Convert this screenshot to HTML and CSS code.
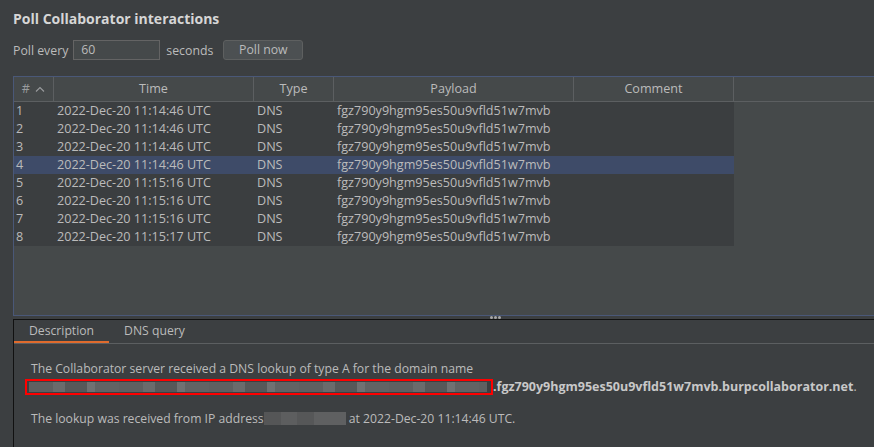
FILE: index.html
```html
<!DOCTYPE html>
<html>
<head>
<meta charset="utf-8">
<link rel="stylesheet" href="styles.css">
</head>
<body>
<div class="page">
  <div class="title">Poll Collaborator interactions</div>
  <div class="poll">
    <span class="lbl">Poll every</span>
    <div class="input">60</div>
    <span class="lbl">seconds</span>
    <div class="btn">Poll now</div>
  </div>
  <div class="tablewrap">
    <div class="thead">
      <div class="th c1"># <svg class="caret" width="10" height="6" viewBox="0 0 10 6"><path d="M1 5.5 L5 1.5 L9 5.5" fill="none" stroke="#9a9c9e" stroke-width="1.1"/></svg></div>
      <div class="th c2">Time</div>
      <div class="th c3">Type</div>
      <div class="th c4">Payload</div>
      <div class="th c5">Comment</div>
      <div class="th c6"></div>
    </div>
    <div class="tbody">
      <div class="tr"><div class="td c1">1</div><div class="td c2">2022-Dec-20 11:14:46 UTC</div><div class="td c3">DNS</div><div class="td c4">fgz790y9hgm95es50u9vfld51w7mvb</div><div class="td c5"></div></div>
      <div class="tr"><div class="td c1">2</div><div class="td c2">2022-Dec-20 11:14:46 UTC</div><div class="td c3">DNS</div><div class="td c4">fgz790y9hgm95es50u9vfld51w7mvb</div><div class="td c5"></div></div>
      <div class="tr"><div class="td c1">3</div><div class="td c2">2022-Dec-20 11:14:46 UTC</div><div class="td c3">DNS</div><div class="td c4">fgz790y9hgm95es50u9vfld51w7mvb</div><div class="td c5"></div></div>
      <div class="tr sel"><div class="td c1">4</div><div class="td c2">2022-Dec-20 11:14:46 UTC</div><div class="td c3">DNS</div><div class="td c4">fgz790y9hgm95es50u9vfld51w7mvb</div><div class="td c5"></div></div>
      <div class="tr"><div class="td c1">5</div><div class="td c2">2022-Dec-20 11:15:16 UTC</div><div class="td c3">DNS</div><div class="td c4">fgz790y9hgm95es50u9vfld51w7mvb</div><div class="td c5"></div></div>
      <div class="tr"><div class="td c1">6</div><div class="td c2">2022-Dec-20 11:15:16 UTC</div><div class="td c3">DNS</div><div class="td c4">fgz790y9hgm95es50u9vfld51w7mvb</div><div class="td c5"></div></div>
      <div class="tr"><div class="td c1">7</div><div class="td c2">2022-Dec-20 11:15:16 UTC</div><div class="td c3">DNS</div><div class="td c4">fgz790y9hgm95es50u9vfld51w7mvb</div><div class="td c5"></div></div>
      <div class="tr"><div class="td c1">8</div><div class="td c2">2022-Dec-20 11:15:17 UTC</div><div class="td c3">DNS</div><div class="td c4">fgz790y9hgm95es50u9vfld51w7mvb</div><div class="td c5"></div></div>
    </div>
  </div>
  <div class="splitter"><span class="dot"></span><span class="dot"></span><span class="dot"></span></div>
  <div class="panel">
    <div class="tabs">
      <div class="tab active">Description</div>
      <div class="tab">DNS query</div>
    </div>
    <div class="content">
      <div class="line1">The Collaborator server received a DNS lookup of type A for the domain name</div>
      <div class="line2"><span class="redbox"><span class="blur wide"></span></span><b>.fgz790y9hgm95es50u9vfld51w7mvb.burpcollaborator.net</b>.</div>
      <div class="line3">The lookup was received from IP address<span class="blur ip"></span> at 2022-Dec-20 11:14:46 UTC.</div>
    </div>
  </div>
</div>
</body>
</html>
```
FILE: styles.css
```css
html, body {
  margin: 0;
  padding: 0;
  background: #3c3f41;
}
body {
  font-family: "Open Sans", "Noto Sans", sans-serif;
  font-size: 12.6px;
  color: #bbbbbb;
  width: 874px;
  height: 447px;
  overflow: hidden;
}
.page {
  padding-left: 13px;
}
.title {
  margin-top: 9px;
  height: 20px;
  line-height: 20px;
  font-size: 14px;
  font-weight: bold;
  color: #d6d6d6;
}
.poll {
  margin-top: 11px;
  height: 20px;
  display: flex;
  align-items: center;
  font-size: 12.3px;
}
.input {
  margin-left: 5px;
  width: 78px;
  height: 18px;
  border: 1px solid #646464;
  background: #45494a;
  padding-left: 7px;
  line-height: 18px;
  color: #bbbbbb;
}
.input + .lbl { margin-left: 6px; }
.btn {
  margin-left: 10px;
  width: 78px;
  height: 18px;
  border: 1px solid #5e6060;
  border-radius: 3px;
  background: #4c5052;
  text-align: center;
  line-height: 18px;
}
.tablewrap {
  margin-top: 16px;
  height: 238px;
  border-top: 1px solid #4a5878;
  border-bottom: 1px solid #4a5878;
  border-left: 1px solid #4a5878;
  background: #45494a;
  display: flex;
  flex-direction: column;
}
.thead {
  display: flex;
  height: 24px;
  border-bottom: 1px solid #5c5f61;
  background: #45494a;
}
.th {
  box-sizing: border-box;
  text-align: center;
  line-height: 24px;
  color: #bbbbbb;
  border-right: 1px solid #5c5f61;
}
.th.c1 { color: #9a9c9e; }
.caret { margin-left: 2px; vertical-align: 1px; }
.th.c6 { flex: 1; border-right: none; }
.c1 { width: 40px; }
.c2 { width: 200px; }
.c3 { width: 80px; }
.c4 { width: 240px; }
.c5 { width: 160px; }
.tbody {
  display: flex;
  flex-direction: column;
  width: 720px;
}
.tr {
  display: flex;
  height: 18px;
  background: #3b3e40;
}
.tr.sel { background: #3e4b68; }
.td {
  box-sizing: border-box;
  line-height: 18px;
  padding-left: 3px;
  white-space: nowrap;
  color: #bbbbbb;
}
.td.c1 { padding-left: 2px; }
.splitter {
  height: 3px;
  display: flex;
  justify-content: center;
  align-items: center;
  gap: 1px;
  margin-left: -13px;
  padding-left: 116px;
}
.dot {
  width: 3px;
  height: 3px;
  border-radius: 50%;
  background: #a8a8a8;
}
.panel {
  border-top: 1px solid #111111;
  border-left: 1px solid #111111;
  height: 130px;
  font-size: 12.2px;
}
.tabs {
  display: flex;
  height: 23px;
  border-bottom: 1px solid #5c5f61;
}
.tab {
  padding: 0 15px;
  line-height: 21px;
  height: 21px;
  border-bottom: 2px solid transparent;
}
.tab.active {
  border-bottom-color: #e06b2d;
}
.content {
  padding-left: 17px;
  padding-top: 16px;
}
.line1 { height: 18px; line-height: 18px; }
.line2 {
  height: 18px;
  line-height: 18px;
  display: flex;
  align-items: center;
  margin-left: -5px;
}
.line2 b { color: #c8c8c8; font-size: 12.5px; }
.redbox {
  width: 462px;
  height: 12px;
  border: 2px solid #ff0000;
  display: inline-flex;
  align-items: center;
  padding: 0 0 0 2px;
  margin-left: -1px;
}
.blur {
  display: inline-block;
  background: repeating-linear-gradient(90deg, #5f6061 0 24px, #6a6b6c 24px 36px, #575859 36px 58px, #707172 58px 66px, #626364 66px 90px);
}
.blur.wide { width: 458px; height: 10px; }
.line3 {
  margin-top: 14px;
  height: 18px;
  line-height: 18px;
  white-space: nowrap;
}
.blur.ip {
  width: 82px;
  height: 13px;
  vertical-align: -2px;
  background: repeating-linear-gradient(90deg, #555657 0 17px, #5d5e5f 17px 33px, #565758 33px 50px, #5f6061 50px 82px);
}
```
